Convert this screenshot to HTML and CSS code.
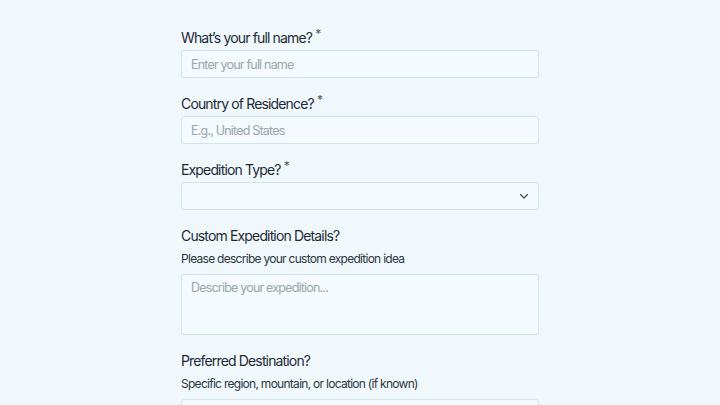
FILE: index.html
```html
<!DOCTYPE html>
<html>
<head>
<meta charset="utf-8">
<link rel="stylesheet" href="styles.css">
</head>
<body>
<form class="form">
  <div class="field">
    <label class="label">What’s your full name? <span class="req">*</span></label>
    <input class="input" type="text" placeholder="Enter your full name">
  </div>
  <div class="field">
    <label class="label">Country of Residence? <span class="req">*</span></label>
    <input class="input" type="text" placeholder="E.g., United States">
  </div>
  <div class="field">
    <label class="label">Expedition Type? <span class="req">*</span></label>
    <div class="select">
      <svg class="chev" width="12" height="12" viewBox="0 0 12 12"><path d="M2.5 4.5 L6 8 L9.5 4.5" fill="none" stroke="#4a5560" stroke-width="1.3" stroke-linecap="round" stroke-linejoin="round"/></svg>
    </div>
  </div>
  <div class="field">
    <label class="label">Custom Expedition Details?</label>
    <div class="help">Please describe your custom expedition idea</div>
    <textarea class="textarea" placeholder="Describe your expedition..."></textarea>
  </div>
  <div class="field">
    <label class="label">Preferred Destination?</label>
    <div class="help">Specific region, mountain, or location (if known)</div>
    <input class="input" type="text">
  </div>
</form>
</body>
</html>
```
FILE: styles.css
```css
html, body {
  margin: 0;
  padding: 0;
  background: #f1f8fb;
  font-family: Inter, "Noto Sans", sans-serif;
  color: #1f2d3a;
}
.form {
  width: 358px;
  margin: 0 auto;
  padding-top: 29px;
  display: flex;
  flex-direction: column;
  gap: 17px;
}
.field {
  display: flex;
  flex-direction: column;
}
.label {
  font-size: 14px;
  line-height: 18px;
  font-weight: 400;
  margin-bottom: 3px;
  letter-spacing: -0.85px;
  color: #1c2a37;
}
.req {
  font-size: 12px;
  line-height: 0;
  color: #4d5963;
  vertical-align: 5px;
  margin-left: 0;
}
.help {
  font-size: 12px;
  line-height: 16px;
  color: #2a3743;
  margin-top: 3px;
  margin-bottom: 7px;
  letter-spacing: -0.72px;
}
.input, .select, .textarea {
  box-sizing: border-box;
  width: 100%;
  height: 28px;
  border: 1px solid #d2e5ed;
  border-radius: 3px;
  background: #f4fafd;
  font-family: inherit;
  font-size: 12.5px;
  letter-spacing: -0.8px;
  color: #1f2d3a;
  padding: 0 9px;
  outline: none;
  margin: 0;
}
.input::placeholder, .textarea::placeholder {
  color: #9ba6ae;
}
.select {
  display: flex;
  align-items: center;
  justify-content: flex-end;
  padding-right: 8px;
}
.textarea {
  height: 61px;
  padding-top: 5px;
  resize: none;
  display: block;
}
```
